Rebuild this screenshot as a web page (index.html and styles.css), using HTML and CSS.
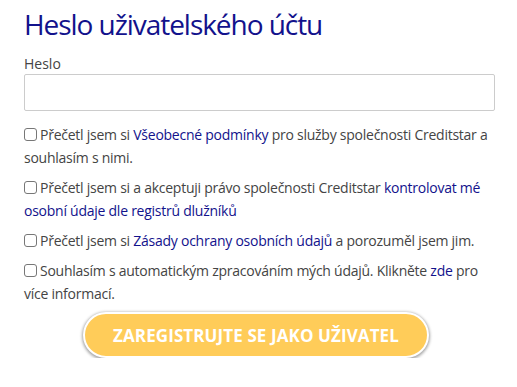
FILE: index.html
```html
<!DOCTYPE html>
<html lang="cs">
<head>
<meta charset="utf-8">
<link rel="stylesheet" href="styles.css">
</head>
<body>
<main class="form">
  <h1 class="title">Heslo uživatelského účtu</h1>
  <label class="field-label" for="pw">Heslo</label>
  <input class="field-input" id="pw" type="password">
  <p class="check"><span class="box"></span>Přečetl jsem si <a href="#">Všeobecné podmínky</a> pro služby společnosti Creditstar a souhlasím s nimi.</p>
  <p class="check"><span class="box"></span>Přečetl jsem si a akceptuji právo společnosti Creditstar <a href="#">kontrolovat mé osobní údaje dle registrů dlužníků</a></p>
  <p class="check"><span class="box"></span>Přečetl jsem si <a href="#">Zásady ochrany osobních údajů</a> a porozuměl jsem jim.</p>
  <p class="check"><span class="box"></span>Souhlasím s automatickým zpracováním mých údajů. Klikněte <a href="#">zde</a> pro více informací.</p>
  <div class="actions">
    <button class="submit" type="button">ZAREGISTRUJTE SE JAKO UŽIVATEL</button>
  </div>
</main>
</body>
</html>
```
FILE: styles.css
```css
html, body {
  margin: 0;
  padding: 0;
  background: #fff;
}
body {
  font-family: "Open Sans", "Noto Sans", sans-serif;
  color: #444;
}
.form {
  padding: 0 23px 0 24px;
  display: flex;
  flex-direction: column;
}
.title {
  margin: 4px 0 0;
  font-weight: 400;
  font-size: 28px;
  line-height: 40px;
  color: #12128c;
  letter-spacing: -1.05px;
}
.field-label {
  margin-top: 10px;
  font-size: 14px;
  line-height: 20px;
  color: #444;
}
.field-input {
  margin: 0 0 12px;
  height: 37px;
  box-sizing: border-box;
  border: 1px solid #ccc;
  border-radius: 2px;
  width: 471px;
  padding: 0 8px;
}
.check {
  margin: 0 0 7px;
  font-size: 14px;
  line-height: 23px;
  color: #444;
  letter-spacing: -0.25px;
}
.check a {
  color: #12128c;
  text-decoration: none;
}
.box {
  display: inline-block;
  width: 11px;
  height: 11px;
  border: 1px solid #777;
  border-radius: 3px;
  margin-right: 3px;
  vertical-align: -1px;
}
.actions {
  display: flex;
  justify-content: center;
  margin-top: 0;
}
.submit {
  width: 346px;
  height: 46px;
  border-radius: 23px;
  border: 2px solid #fff;
  background: #ffcc59;
  box-shadow: 0 1px 3px 1px rgba(0,0,0,0.35);
  color: #fff;
  font-family: "Open Sans", "Noto Sans", sans-serif;
  font-weight: 700;
  font-size: 17px;
  letter-spacing: 0.1px;
  margin-right: 6px;
}
```
